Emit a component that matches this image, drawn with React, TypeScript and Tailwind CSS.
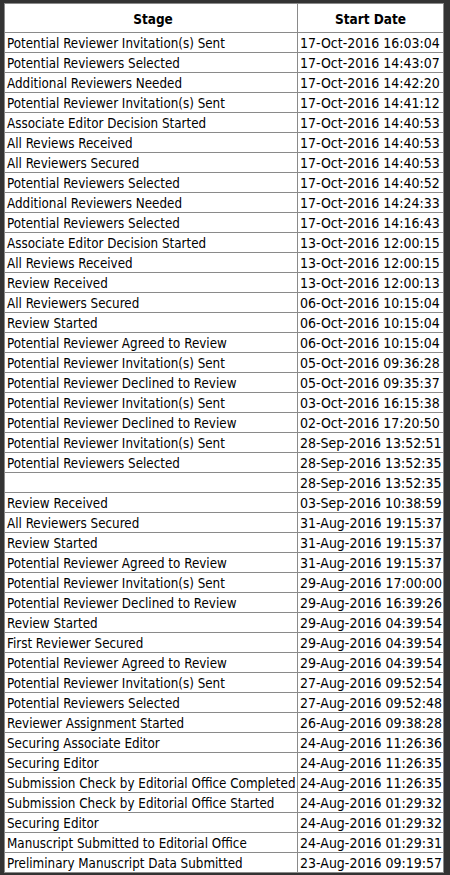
const rows: [string, string][] = [
  ['Potential Reviewer Invitation(s) Sent', '17-Oct-2016 16:03:04'],
  ['Potential Reviewers Selected', '17-Oct-2016 14:43:07'],
  ['Additional Reviewers Needed', '17-Oct-2016 14:42:20'],
  ['Potential Reviewer Invitation(s) Sent', '17-Oct-2016 14:41:12'],
  ['Associate Editor Decision Started', '17-Oct-2016 14:40:53'],
  ['All Reviews Received', '17-Oct-2016 14:40:53'],
  ['All Reviewers Secured', '17-Oct-2016 14:40:53'],
  ['Potential Reviewers Selected', '17-Oct-2016 14:40:52'],
  ['Additional Reviewers Needed', '17-Oct-2016 14:24:33'],
  ['Potential Reviewers Selected', '17-Oct-2016 14:16:43'],
  ['Associate Editor Decision Started', '13-Oct-2016 12:00:15'],
  ['All Reviews Received', '13-Oct-2016 12:00:15'],
  ['Review Received', '13-Oct-2016 12:00:13'],
  ['All Reviewers Secured', '06-Oct-2016 10:15:04'],
  ['Review Started', '06-Oct-2016 10:15:04'],
  ['Potential Reviewer Agreed to Review', '06-Oct-2016 10:15:04'],
  ['Potential Reviewer Invitation(s) Sent', '05-Oct-2016 09:36:28'],
  ['Potential Reviewer Declined to Review', '05-Oct-2016 09:35:37'],
  ['Potential Reviewer Invitation(s) Sent', '03-Oct-2016 16:15:38'],
  ['Potential Reviewer Declined to Review', '02-Oct-2016 17:20:50'],
  ['Potential Reviewer Invitation(s) Sent', '28-Sep-2016 13:52:51'],
  ['Potential Reviewers Selected', '28-Sep-2016 13:52:35'],
  ['', '28-Sep-2016 13:52:35'],
  ['Review Received', '03-Sep-2016 10:38:59'],
  ['All Reviewers Secured', '31-Aug-2016 19:15:37'],
  ['Review Started', '31-Aug-2016 19:15:37'],
  ['Potential Reviewer Agreed to Review', '31-Aug-2016 19:15:37'],
  ['Potential Reviewer Invitation(s) Sent', '29-Aug-2016 17:00:00'],
  ['Potential Reviewer Declined to Review', '29-Aug-2016 16:39:26'],
  ['Review Started', '29-Aug-2016 04:39:54'],
  ['First Reviewer Secured', '29-Aug-2016 04:39:54'],
  ['Potential Reviewer Agreed to Review', '29-Aug-2016 04:39:54'],
  ['Potential Reviewer Invitation(s) Sent', '27-Aug-2016 09:52:54'],
  ['Potential Reviewers Selected', '27-Aug-2016 09:52:48'],
  ['Reviewer Assignment Started', '26-Aug-2016 09:38:28'],
  ['Securing Associate Editor', '24-Aug-2016 11:26:36'],
  ['Securing Editor', '24-Aug-2016 11:26:35'],
  ['Submission Check by Editorial Office Completed', '24-Aug-2016 11:26:35'],
  ['Submission Check by Editorial Office Started', '24-Aug-2016 01:29:32'],
  ['Securing Editor', '24-Aug-2016 01:29:32'],
  ['Manuscript Submitted to Editorial Office', '24-Aug-2016 01:29:31'],
  ['Preliminary Manuscript Data Submitted', '23-Aug-2016 09:19:57'],
]

export default function App() {
  return (
    <div className="h-[875px] w-[450px] overflow-hidden bg-[#333333] pl-[4px] pt-[3px] font-['DejaVu_Sans_Condensed','DejaVu_Sans',sans-serif] text-black">
      <table className="table-fixed border-separate border-spacing-px bg-[#8a8a8a]">
        <thead>
          <tr>
            <th className="h-[28px] w-[292px] bg-white pt-[3px] pl-[4px] text-center text-[13.5px] leading-[25px] font-bold">Stage</th>
            <th className="h-[28px] w-[145px] bg-white pt-[3px] text-center text-[13.5px] leading-[25px] font-bold">Start Date</th>
          </tr>
        </thead>
        <tbody>
          {rows.map(([stage, date], i) => (
            <tr key={i}>
              <td className="h-[19px] bg-white pl-[2px] pt-[2px] align-top text-[13.3px] leading-[17px] whitespace-nowrap">{stage}</td>
              <td className="h-[19px] bg-white pl-[2px] pt-px align-top text-[14px] leading-[18px] whitespace-nowrap">{date}</td>
            </tr>
          ))}
        </tbody>
      </table>
    </div>
  )
}
